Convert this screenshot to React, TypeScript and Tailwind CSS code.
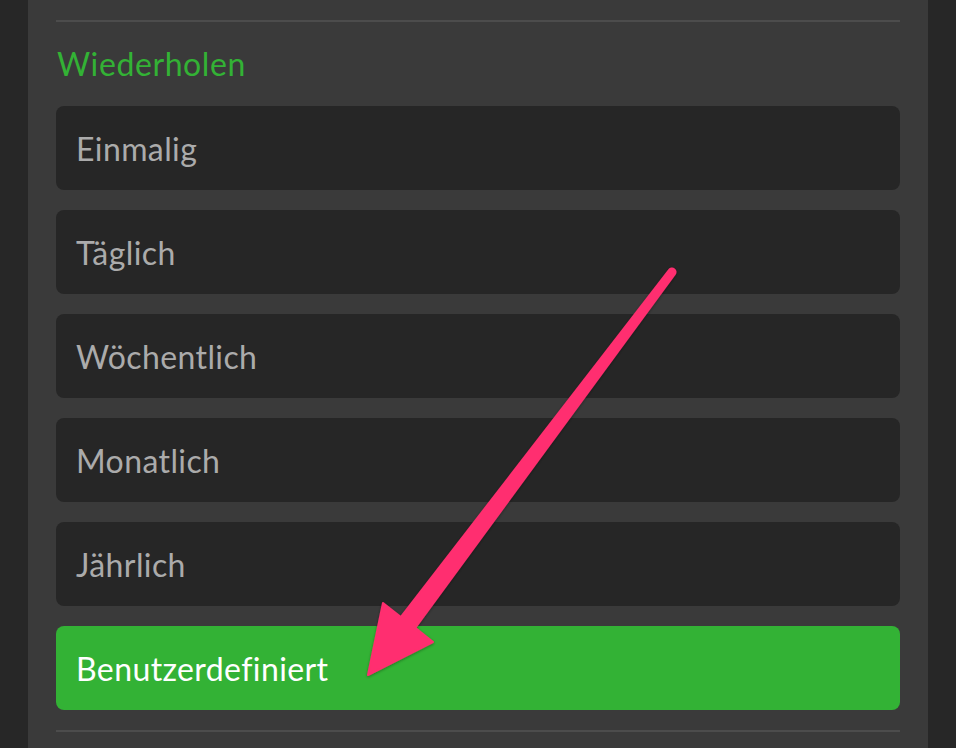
import React from "react";

const items = ["Einmalig", "Täglich", "Wöchentlich", "Monatlich", "Jährlich"];

export default function App() {
  return (
    <div
      className="relative w-[956px] h-[748px] bg-[#272727] flex overflow-hidden"
      style={{ fontFamily: "Lato, 'Noto Sans', sans-serif" }}
    >
      <div className="ml-[28px] w-[900px] h-full bg-[#3a3a3a] px-[28px] pt-[20px] flex flex-col">
        <div className="h-[2px] bg-[#4c4c4c]" />
        <div className="mt-[22px] h-[40px] flex items-center pl-[1px] text-[32px] text-[#33b235] tracking-[0.6px]">
          Wiederholen
        </div>
        <div className="mt-[22px] flex flex-col gap-[20px]">
          {items.map((t) => (
            <div
              key={t}
              className="h-[84px] rounded-[8px] bg-[#262626] flex items-center pl-[20px] pt-[2px] text-[32px] text-[#ababab] tracking-[0.4px]"
            >
              {t}
            </div>
          ))}
          <div className="h-[84px] rounded-[8px] bg-[#33b235] flex items-center pl-[20px] pt-[2px] text-[32px] text-white tracking-[0.4px]">
            Benutzerdefiniert
          </div>
        </div>
        <div className="mt-[20px] h-[2px] bg-[#4c4c4c]" />
      </div>
      <svg
        className="absolute left-0 top-0 pointer-events-none"
        width="956"
        height="748"
        viewBox="0 0 956 748"
      >
        <defs>
          <filter id="sh" x="-20%" y="-20%" width="140%" height="140%">
            <feDropShadow dx="0" dy="1" stdDeviation="1.5" floodColor="#000" floodOpacity="0.35" />
          </filter>
        </defs>
        <path
          d="M368 675 L383 603 L400.8 617.1 L669.2 269.9 A3.5 3.5 0 0 1 674.8 274.1 L415.2 627.9 L433 642 Z"
          fill="#ff2e6f"
          stroke="#ff2e6f"
          strokeWidth="2"
          strokeLinejoin="round"
          filter="url(#sh)"
        />
      </svg>
    </div>
  );
}
